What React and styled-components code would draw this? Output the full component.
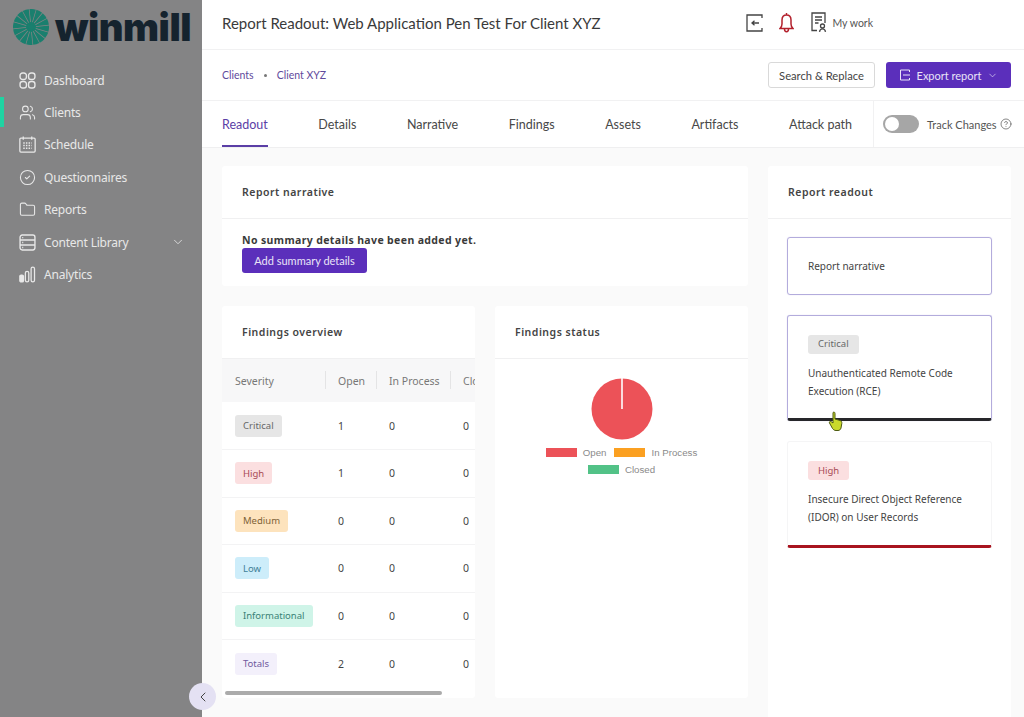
import React from 'react';
import styled, { createGlobalStyle } from 'styled-components';
import { CalendarDays, ChevronDown, ChevronLeft, CircleCheck, CircleHelp, Folder, Users } from 'lucide-react';

const GlobalStyle = createGlobalStyle`
    html, body {
        margin: 0;
        height: 100%;
        overflow: hidden;
    }
    body {
        font-family: "Noto Sans", sans-serif;
        color: #333;
        background: #fafafa;
    }
    * {
        box-sizing: border-box;
    }
`;

const HEAD_FONT = 'Lato, "Noto Sans", sans-serif';

const SEVERITY = {
    Critical: { bg: '#e6e6e6', fg: '#666' },
    High: { bg: '#fbdfe0', fg: '#a84a55' },
    Medium: { bg: '#fde3bd', fg: '#7d6236' },
    Low: { bg: '#cdedfa', fg: '#3f7f96' },
    Informational: { bg: '#cff4e8', fg: '#3a8276' },
    Totals: { bg: '#f3f0fb', fg: '#6f5a9e' },
};

const Page = styled.div`
    position: relative;
    display: flex;
    width: 1024px;
    height: 717px;
    overflow: hidden;
`;

const Sidebar = styled.aside`
    flex: 0 0 202px;
    background: #848485;
    padding-top: 8px;
`;

const Logo = styled.div`
    display: flex;
    align-items: center;
    gap: 6px;
    height: 38px;
    padding-left: 13px;
    margin-bottom: 18px;
`;

const LogoText = styled.span`
    font-family: Inter, sans-serif;
    font-weight: 900;
    font-size: 38.2px;
    line-height: 38px;
    letter-spacing: -0.5px;
    color: #15232e;
`;

const SideNav = styled.nav`
    display: flex;
    flex-direction: column;
`;

const SideItem = styled.a`
    position: relative;
    display: flex;
    align-items: center;
    gap: 8px;
    height: 32.4px;
    padding-left: 19px;
    padding-right: 17px;
    font-size: 12px;
    letter-spacing: -0.2px;
    color: #e8e8e8;

    svg {
        flex: none;
    }

    ${(p) => p.$active && `
        &::before {
            content: '';
            position: absolute;
            left: 0;
            top: 1px;
            width: 4px;
            height: 30px;
            background: #1fd3a2;
        }
    `}
`;

const SideChevron = styled(ChevronDown)`
    margin-left: auto;
`;

const Main = styled.main`
    flex: 1;
    display: flex;
    flex-direction: column;
    min-width: 0;
`;

const TopBar = styled.header`
    display: flex;
    align-items: center;
    justify-content: space-between;
    height: 50px;
    padding: 0 151px 4px 20px;
    background: #fff;
    border-bottom: 1px solid #f1f1f2;
`;

const Title = styled.h1`
    margin: 0;
    font-family: ${HEAD_FONT};
    font-size: 15px;
    font-weight: 400;
    color: #3a3a3a;
`;

const TopActions = styled.div`
    display: flex;
    align-items: center;
    color: #444;
`;

const MyWork = styled.span`
    margin-left: 4px;
    font-family: ${HEAD_FONT};
    font-size: 10.5px;
    color: #555;
`;

const SubBar = styled.div`
    display: flex;
    align-items: center;
    height: 51px;
    padding: 0 13px 0 20px;
    background: #fff;
    border-bottom: 1px solid #f1f1f2;
`;

const Crumbs = styled.div`
    display: flex;
    align-items: center;
    gap: 10px;
    font-family: ${HEAD_FONT};
    font-size: 10.5px;
    color: #5f4a9c;
`;

const CrumbDot = styled.span`
    width: 3px;
    height: 3px;
    border-radius: 50%;
    background: #777;
`;

const ButtonRow = styled.div`
    display: flex;
    gap: 11px;
    margin-left: auto;
`;

const GhostButton = styled.button`
    height: 26px;
    width: 107px;
    padding: 0;
    border: 1px solid #d9d9d9;
    border-radius: 3px;
    background: #fff;
    font-family: ${HEAD_FONT};
    font-size: 11.2px;
    color: #444;
`;

const PrimaryButton = styled.button`
    display: inline-flex;
    align-items: center;
    justify-content: center;
    gap: 6px;
    height: ${(p) => p.$height || 26}px;
    width: ${(p) => p.$width}px;
    padding: 0;
    border: 0;
    border-radius: 3px;
    background: #5b2fbb;
    font-family: ${HEAD_FONT};
    font-size: 11px;
    color: #e9e4f7;
`;

const TabBar = styled.div`
    display: flex;
    height: 47px;
    background: #fff;
    border-bottom: 1px solid #efeff0;
`;

const Tabs = styled.div`
    flex: 0 0 672px;
    display: flex;
    justify-content: space-between;
    padding: 0 21px 0 20px;
    border-right: 1px solid #f1f1f2;
`;

const Tab = styled.a`
    display: flex;
    align-items: center;
    height: 46px;
    padding-top: 2px;
    font-family: ${HEAD_FONT};
    font-size: 12.5px;
    color: ${(p) => (p.$active ? '#5b3ea6' : '#484848')};
    border-bottom: 2px solid ${(p) => (p.$active ? '#5b3ea6' : 'transparent')};
`;

const TrackChanges = styled.div`
    flex: 1;
    display: flex;
    align-items: center;
    padding-left: 9px;
    font-family: ${HEAD_FONT};
    font-size: 11px;
    color: #555;
`;

const Toggle = styled.span`
    width: 36px;
    height: 18px;
    margin-right: 8px;
    padding: 2px;
    border-radius: 9px;
    background: #a6a6a6;

    &::before {
        content: '';
        display: block;
        width: 14px;
        height: 14px;
        border-radius: 50%;
        background: #fff;
    }
`;

const HelpIcon = styled(CircleHelp)`
    margin-left: 3px;
`;

const Content = styled.div`
    flex: 1;
    display: flex;
    gap: 20px;
    min-height: 0;
    padding: 18px 13px 0 20px;
`;

const LeftColumn = styled.div`
    flex: 0 0 526px;
    min-width: 0;
    display: flex;
    flex-direction: column;
    gap: 20px;
`;

const TwoCards = styled.div`
    display: flex;
    gap: 20px;
    height: 392px;
`;

const Card = styled.section`
    flex: ${(p) => (p.$grow ? '1 1 0' : 'none')};
    min-width: 0;
    height: ${(p) => (p.$tall ? '600px' : 'auto')};
    background: #fff;
    border-radius: 3px;
    overflow: hidden;
`;

const CardTitle = styled.h2`
    display: flex;
    align-items: center;
    height: 53px;
    margin: 0;
    padding-left: 20px;
    font-size: 10.5px;
    font-weight: 600;
    letter-spacing: 0.5px;
    color: #444;
    border-bottom: 1px solid #f0f0f1;
`;

const NarrativeBody = styled.div`
    padding: 14px 20px 13px;
`;

const EmptyText = styled.p`
    margin: 0;
    font-size: 10.5px;
    line-height: 15px;
    font-weight: 700;
    letter-spacing: 0.37px;
    color: #3a3a3a;
`;

const TableClip = styled.div`
    overflow: hidden;
`;

const Table = styled.table`
    width: 340px;
    table-layout: fixed;
    border-collapse: collapse;
    font-size: 10.5px;
`;

const Th = styled.th`
    position: relative;
    width: ${(p) => p.$w}px;
    height: 43px;
    padding: 0 0 0 13px;
    background: #f7f7f8;
    font-weight: 400;
    font-size: 10.5px;
    text-align: left;
    color: #777;

    &:not(:first-child)::before {
        content: '';
        position: absolute;
        left: 0;
        top: 12px;
        height: 18px;
        width: 1px;
        background: #e4e4e5;
    }
`;

const Td = styled.td`
    height: 47.5px;
    padding: 0 0 0 13px;
    color: #444;
    border-bottom: 1px solid #f3f3f4;

    tr:last-child > & {
        border-bottom: 0;
    }
`;

const Badge = styled.span`
    display: inline-flex;
    align-items: center;
    height: 22px;
    padding: 0 8px;
    border-radius: 3px;
    font-size: 9.5px;
    background: ${(p) => SEVERITY[p.$level].bg};
    color: ${(p) => SEVERITY[p.$level].fg};
`;

const Scrollbar = styled.div`
    width: 217px;
    height: 4px;
    margin: 4px 0 0 3px;
    border-radius: 2px;
    background: #ababab;
`;

const PieWrap = styled.div`
    display: flex;
    flex-direction: column;
    align-items: center;
    padding-top: 19px;
`;

const Legend = styled.div`
    display: flex;
    flex-wrap: wrap;
    justify-content: center;
    gap: 0 8px;
    width: 170px;
    margin-top: 4px;
    font-family: "Liberation Sans", sans-serif;
    font-size: 9.7px;
    line-height: 17px;
    color: #8a8a8a;
`;

const LegendItem = styled.span`
    display: inline-flex;
    align-items: center;
    gap: 6px;
`;

const Swatch = styled.i`
    width: 31px;
    height: 9px;
    background: ${(p) => p.$color};
`;

const ReadoutList = styled.div`
    display: flex;
    flex-direction: column;
    gap: 20px;
    padding: 18px 19px 0;
`;

const ReadoutCard = styled.div`
    display: flex;
    flex-direction: column;
    justify-content: center;
    align-items: flex-start;
    height: ${(p) => p.$h}px;
    padding: 0 20px;
    border-radius: 3px;
    font-size: 10px;
    line-height: 18px;
    color: #444;
    border: ${(p) => (p.$outlined ? '1px solid #b3acdc' : '1px solid #f5f5f6')};
    border-bottom: ${(p) => (p.$accent ? `3px solid ${p.$accent}` : undefined)};
    box-shadow: ${(p) => (p.$outlined ? '0 0 1px #c9c4e8' : 'none')};
`;

const ReadoutBadge = styled(Badge)`
    height: 19px;
    padding: 0 10px;
    margin-bottom: 10px;
`;

const Collapse = styled.button`
    position: absolute;
    left: 189px;
    top: 683px;
    display: flex;
    align-items: center;
    justify-content: center;
    width: 27px;
    height: 27px;
    padding: 0;
    border: 0;
    border-radius: 50%;
    background: #e4e1f3;
    color: #444;
`;

const Cursor = styled.svg`
    position: absolute;
    left: 828px;
    top: 411px;
`;

const BellSvg = styled.svg`
    margin: 0 17px 0 16px;
    color: #b3202c;
`;

const DashboardIcon = () => (
    <svg width="17" height="17" viewBox="0 0 16 16" fill="none" stroke="currentColor" strokeWidth="1.3">
        <rect x="1" y="1" width="6" height="6" rx="2.4" />
        <rect x="9" y="1" width="6" height="6" rx="2.4" />
        <rect x="1" y="9" width="6" height="6" rx="2.4" />
        <rect x="9" y="9" width="6" height="6" rx="2.4" />
    </svg>
);

const ScheduleIcon = () => (
    <svg width="17" height="17" viewBox="0 0 16 16" fill="none" stroke="currentColor" strokeWidth="1.2">
        <rect x="0.8" y="2" width="14.400" height="13.200" rx="1" />
        <path d="M4 .5v3M12 .5v3" />
        <path d="M4 6.500h8M4 9h8M4 11.500h8" strokeWidth="1.400" strokeDasharray="1.400 1.100" />
    </svg>
);

const LibraryIcon = () => (
    <svg width="17" height="17" viewBox="0 0 16 16" fill="none" stroke="currentColor" strokeWidth="1.3">
        <rect x="1" y="1" width="14" height="14" rx="2" />
        <path d="M1 5.7h14M1 10.3h14M3 3.4h1M3 8h1M3 12.7h1" />
    </svg>
);

const AnalyticsIcon = () => (
    <svg width="17" height="17" viewBox="0 0 16 16" fill="none" stroke="currentColor" strokeWidth="1.2">
        <rect x="0.8" y="8.5" width="3.4" height="6.5" rx="1.2" fill="currentColor" />
        <rect x="6" y="5" width="3.2" height="10" rx="1.6" />
        <rect x="11.4" y="1" width="3.2" height="14" rx="1.6" />
    </svg>
);

const ExitIcon = () => (
    <svg width="17" height="18" viewBox="0 0 17 18" fill="none" stroke="currentColor" strokeWidth="1.3">
        <path d="M16 4V1H1v16h15v-3" />
        <path d="M13 9H6M8.500 6.800 6 9l2.500 2.200" />
    </svg>
);

const AlertBell = () => (
    <BellSvg width="15" height="21" viewBox="0 0 15 21" fill="none" stroke="currentColor" strokeWidth="1.5">
        <path d="M7.500 1v2M7.500 3C4.500 3 3 5.300 3 8v4c0 2-.8 3.300-2 4.500h13c-1.200-1.200-2-2.500-2-4.500V8c0-2.700-1.500-5-4.500-5Z" />
        <path d="M5.500 16.800c0 1.800.8 3 2 3s2-1.200 2-3" />
    </BellSvg>
);

const WorkIcon = () => (
    <svg width="17" height="21" viewBox="0 0 17 21" fill="none" stroke="currentColor" strokeWidth="1.3">
        <path d="M6 18.500H1V1h13v10" />
        <path d="M4 5h7M4 8h7M4 11h3.500" />
        <circle cx="11.500" cy="14" r="2" />
        <path d="M8.500 19.800c.3-2 1.400-3 3-3s2.700 1 3 3" />
    </svg>
);

const ExportIcon = () => (
    <svg width="12" height="12" viewBox="0 0 12 12" fill="none" stroke="currentColor" strokeWidth="1">
        <path d="M10.500 3V1H1.500v10h9V9" />
        <path d="M4 6h7" />
    </svg>
);

const Sunburst = () => {
    const blades = Array.from({ length: 16 }, (_, i) => i * 22.5);
    return (
        <svg width="36" height="36" viewBox="-18 -18 36 36">
            <circle r="5" fill="#1a7f6e" />
            {blades.map((angle) => (
                <path key={angle} d="M0.200 -2 L-1.500 -18 A18 18 0 0 1 4.800 -17.300 Z" fill="#1a7f6e" transform={`rotate(${angle})`} />
            ))}
        </svg>
    );
};

const NAV = [
    { label: 'Dashboard', icon: <DashboardIcon /> },
    { label: 'Clients', icon: <Users size={17} strokeWidth={1.5} />, active: true },
    { label: 'Schedule', icon: <ScheduleIcon /> },
    { label: 'Questionnaires', icon: <CircleCheck size={17} strokeWidth={1.5} /> },
    { label: 'Reports', icon: <Folder size={17} strokeWidth={1.5} /> },
    { label: 'Content Library', icon: <LibraryIcon />, chevron: true },
    { label: 'Analytics', icon: <AnalyticsIcon /> },
];

const TABS = ['Readout', 'Details', 'Narrative', 'Findings', 'Assets', 'Artifacts', 'Attack path'];

const ROWS = [
    ['Critical', 1, 0, 0],
    ['High', 1, 0, 0],
    ['Medium', 0, 0, 0],
    ['Low', 0, 0, 0],
    ['Informational', 0, 0, 0],
    ['Totals', 2, 0, 0],
];

const App = () => (
    <Page>
        <GlobalStyle />
        <Sidebar>
            <Logo>
                <Sunburst />
                <LogoText>winmill</LogoText>
            </Logo>
            <SideNav>
                {NAV.map((item) => (
                    <SideItem key={item.label} $active={item.active}>
                        {item.icon}
                        {item.label}
                        {item.chevron && <SideChevron size={14} strokeWidth={1.4} />}
                    </SideItem>
                ))}
            </SideNav>
        </Sidebar>

        <Main>
            <TopBar>
                <Title>Report Readout: Web Application Pen Test For Client XYZ</Title>
                <TopActions>
                    <ExitIcon />
                    <AlertBell />
                    <WorkIcon />
                    <MyWork>My work</MyWork>
                </TopActions>
            </TopBar>

            <SubBar>
                <Crumbs>
                    <span>Clients</span>
                    <CrumbDot />
                    <span>Client XYZ</span>
                </Crumbs>
                <ButtonRow>
                    <GhostButton>Search &amp; Replace</GhostButton>
                    <PrimaryButton $width={125}>
                        <ExportIcon />
                        Export report
                        <ChevronDown size={11} strokeWidth={1.4} />
                    </PrimaryButton>
                </ButtonRow>
            </SubBar>

            <TabBar>
                <Tabs>
                    {TABS.map((tab) => (
                        <Tab key={tab} $active={tab === 'Readout'}>{tab}</Tab>
                    ))}
                </Tabs>
                <TrackChanges>
                    <Toggle />
                    Track Changes
                    <HelpIcon size={12} strokeWidth={1.4} />
                </TrackChanges>
            </TabBar>

            <Content>
                <LeftColumn>
                    <Card>
                        <CardTitle>Report narrative</CardTitle>
                        <NarrativeBody>
                            <EmptyText>No summary details have been added yet.</EmptyText>
                            <PrimaryButton $width={125} $height={25}>Add summary details</PrimaryButton>
                        </NarrativeBody>
                    </Card>
                    <TwoCards>
                        <Card $grow>
                            <CardTitle>Findings overview</CardTitle>
                            <TableClip>
                                <Table>
                                    <thead>
                                        <tr>
                                            <Th $w={103}>Severity</Th>
                                            <Th $w={51}>Open</Th>
                                            <Th $w={74}>In Process</Th>
                                            <Th $w={112}>Closed</Th>
                                        </tr>
                                    </thead>
                                    <tbody>
                                        {ROWS.map(([level, open, inProcess, closed]) => (
                                            <tr key={level}>
                                                <Td><Badge $level={level}>{level}</Badge></Td>
                                                <Td>{open}</Td>
                                                <Td>{inProcess}</Td>
                                                <Td>{closed}</Td>
                                            </tr>
                                        ))}
                                    </tbody>
                                </Table>
                            </TableClip>
                            <Scrollbar />
                        </Card>
                        <Card $grow>
                            <CardTitle>Findings status</CardTitle>
                            <PieWrap>
                                <svg width="62" height="62" viewBox="0 0 62 62">
                                    <circle cx="31" cy="31" r="30.500" fill="#ec5258" />
                                    <path d="M31 0v31" stroke="#fff" strokeWidth="1.600" />
                                </svg>
                                <Legend>
                                    <LegendItem><Swatch $color="#ec5258" />Open</LegendItem>
                                    <LegendItem><Swatch $color="#fba021" />In Process</LegendItem>
                                    <LegendItem><Swatch $color="#52c287" />Closed</LegendItem>
                                </Legend>
                            </PieWrap>
                        </Card>
                    </TwoCards>
                </LeftColumn>

                <Card $grow $tall>
                    <CardTitle>Report readout</CardTitle>
                    <ReadoutList>
                        <ReadoutCard $h={58} $outlined>Report narrative</ReadoutCard>
                        <ReadoutCard $h={106} $outlined $accent="#26262a">
                            <ReadoutBadge $level="Critical">Critical</ReadoutBadge>
                            Unauthenticated Remote Code Execution (RCE)
                        </ReadoutCard>
                        <ReadoutCard $h={107} $accent="#a8141f">
                            <ReadoutBadge $level="High">High</ReadoutBadge>
                            Insecure Direct Object Reference (IDOR) on User Records
                        </ReadoutCard>
                    </ReadoutList>
                </Card>
            </Content>
        </Main>

        <Collapse><ChevronLeft size={16} strokeWidth={1.5} /></Collapse>

        <Cursor width="16" height="20" viewBox="0 0 16 20">
            <path d="M5 1.500c1-.8 2-.3 2 1V8l5 1.500c1.500.5 2 1.500 1.800 3L13 17c-.3 1.500-1.500 2.500-3 2.500H8c-1.500 0-2.500-.7-3.500-2L1.500 12c-.5-1 .5-2 1.500-1.500L5 12V1.500Z" fill="#c9d92b" stroke="#4c5a10" strokeWidth="1" />
        </Cursor>
    </Page>
);

export default App;
